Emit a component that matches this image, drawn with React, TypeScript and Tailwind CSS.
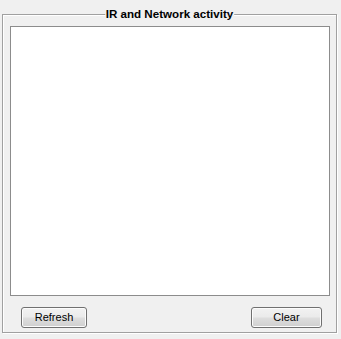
import React from 'react';

const Button: React.FC<{ label: string; width: string }> = ({ label, width }) => (
  <button
    className={`${width} h-[21px] rounded-[3px] border border-[#707070] bg-[linear-gradient(#f2f2f2,#ebebeb_45%,#dddddd_55%,#cfcfcf)] shadow-[inset_0_0_0_1px_#fcfcfc] text-[11px] text-black leading-none flex items-center justify-center`}
  >
    {label}
  </button>
);

export default function App() {
  return (
    <div className="w-[341px] h-[339px] bg-[#f0f0f0] pt-[14px] pl-[2px] font-['Liberation_Sans',Arial,sans-serif]">
      {/* Group box */}
      <div className="relative w-[335px] h-[319px] border border-[#a0a0a0] shadow-[inset_1px_1px_0_#ffffff,1px_1px_0_#ffffff] flex flex-col">
        <span className="absolute -top-[8px] left-1/2 -translate-x-1/2 px-[1px] bg-[#f0f0f0] text-[11.6px] leading-[14px] font-bold text-black whitespace-nowrap">
          IR and Network activity
        </span>

        {/* Activity log */}
        <div className="ml-[7px] mt-[11px] w-[320px] h-[270px] bg-white border border-[#8c8c8c]" />

        <div className="mt-[11px] pl-[18px] pr-[14px] flex justify-between">
          <Button label="Refresh" width="w-[66px]" />
          <Button label="Clear" width="w-[71px]" />
        </div>
      </div>
    </div>
  );
}
